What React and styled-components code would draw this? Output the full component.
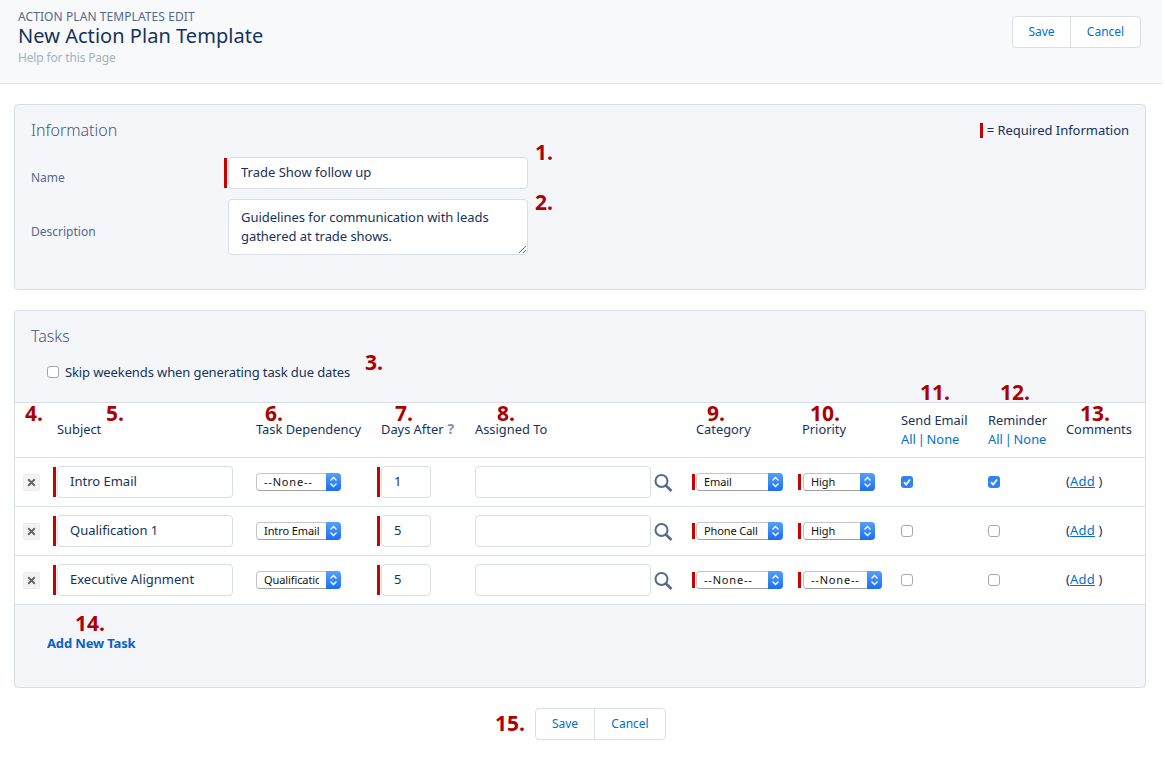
import styled, { createGlobalStyle } from 'styled-components';

const GlobalStyle = createGlobalStyle`
    * { box-sizing: border-box; }
    html, body { margin: 0; padding: 0; background: #fff; }
    body {
        font-family: "Noto Sans", "Open Sans", sans-serif;
        font-size: 13px;
        color: #16325c;
    }
`

const Page = styled.div`
    position: relative;
    width: 1162px;
    min-height: 761px;
`

const PageHeader = styled.header`
    height: 84px;
    display: flex;
    justify-content: space-between;
    align-items: flex-start;
    padding: 9px 21px 0 18px;
    background: #f7f9fb;
    border-bottom: 1px solid #d8dde6;
`

const Eyebrow = styled.div`
    font-size: 12px;
    line-height: 16px;
    letter-spacing: 0.08px;
    color: #54698d;
`

const Title = styled.h1`
    margin: 0;
    font-size: 20px;
    font-weight: 400;
    line-height: 22px;
    letter-spacing: 0.04px;
    color: #16325c;
`

const HelpLink = styled.a`
    display: block;
    margin-top: 3px;
    font-size: 12px;
    line-height: 16px;
    letter-spacing: -0.16px;
    color: #a4b1c2;
`

const ButtonGroup = styled.div`
    display: flex;
    height: 32px;
    margin-top: ${props => props.$top || 0}px;
    background: #fff;
    border: 1px solid #d8dde6;
    border-radius: 4px;
`

const Button = styled.button`
    width: ${props => props.$width}px;
    padding: 0 0 2px;
    border: none;
    background: none;
    font-family: inherit;
    font-size: 12px;
    color: #0070d2;
    & + & {
        border-left: 1px solid #d8dde6;
    }
`

const Main = styled.main`
    padding: 20px 16px 0 14px;
`

const Panel = styled.section`
    height: ${props => props.$height}px;
    margin-bottom: 20px;
    background: #f4f6f9;
    border: 1px solid #d8dde6;
    border-radius: 4px;
`

const PanelHead = styled.div`
    display: flex;
    justify-content: space-between;
    align-items: center;
    padding: 15px 16px 0;
`

const PanelTitle = styled.h2`
    margin: 0;
    font-size: 16px;
    font-weight: 300;
    line-height: 20px;
    color: #44597f;
`

const Legend = styled.div`
    display: flex;
    align-items: center;
    gap: 4px;
    font-size: 13px;
    letter-spacing: -0.03px;
    color: #16325c;
`

const RedBar = styled.span`
    flex: none;
    width: 3px;
    height: ${props => props.$height}px;
    background: #c80000;
`

const Form = styled.div`
    display: flex;
    flex-direction: column;
    gap: 10px;
    margin-top: 17px;
    padding-left: 16px;
`

const FormRow = styled.div`
    display: grid;
    grid-template-columns: 193px auto;
    align-items: center;
`

const FormLabel = styled.label`
    padding-top: 8px;
    font-size: 12px;
    color: #54698d;
`

const Required = styled.div`
    display: flex;
    align-items: center;
    gap: 1px;
`

const TextInput = styled.input`
    width: ${props => props.$width}px;
    height: 32px;
    padding: 0 12px 2px;
    border: 1px solid #d8dde6;
    border-radius: 4px;
    outline: none;
    background: #fff;
    font-family: inherit;
    font-size: 13px;
    color: #16325c;
`

const TextArea = styled.textarea`
    display: block;
    width: 300px;
    height: 56px;
    margin-left: 4px;
    padding: 8px 12px;
    border: 1px solid #d8dde6;
    border-radius: 4px;
    outline: none;
    background: #fff;
    font-family: inherit;
    font-size: 13px;
    line-height: 19px;
    letter-spacing: -0.05px;
    color: #16325c;
`

const SkipRow = styled.label`
    display: flex;
    align-items: center;
    gap: 6px;
    height: 22px;
    margin: 15px 0 19px 32px;
    font-size: 13px;
    letter-spacing: -0.11px;
    color: #16325c;
`

const Box = styled.span`
    display: flex;
    align-items: center;
    justify-content: center;
    width: 12px;
    height: 12px;
    background: ${props => (props.$checked ? '#2f83f5' : '#fff')};
    border: ${props => (props.$checked ? 'none' : '1px solid #a9a9a9')};
    border-radius: 3px;
`

const Table = styled.div`
    border-top: 1px solid #d8dde6;
    background: #fff;
`

const Row = styled.div`
    display: grid;
    grid-template-columns: 38px 203px 121px 98px 217px 106px 103px 87px 78px 79px;
    align-items: center;
    height: ${props => props.$height}px;
    border-bottom: 1px solid #d8dde6;
`

const HeadCell = styled.div`
    display: flex;
    flex-direction: column;
    padding-left: ${props => props.$indent || 0}px;
    padding-bottom: ${props => (props.$stacked ? 0 : 2)}px;
    font-size: 12.85px;
    line-height: 19px;
    white-space: nowrap;
    color: #16325c;
`

const Hint = styled.span`
    margin-left: 4px;
    font-size: 14px;
    font-weight: 700;
    color: #8090a8;
`

const Cell = styled.div`
    display: flex;
    align-items: center;
    gap: ${props => props.$gap || 0}px;
    padding-left: ${props => props.$indent || 0}px;
`

const RemoveButton = styled.span`
    display: flex;
    align-items: center;
    justify-content: center;
    width: 17px;
    height: 17px;
    margin-left: 8px;
    background: #f2f2f2;
    border: 1px solid #ececec;
    border-radius: 2px;
`

const Select = styled.div`
    display: flex;
    width: ${props => props.$width}px;
    height: 18px;
    background: #fff;
    border: 1px solid #c4c4c4;
    border-bottom-color: #a0a0a0;
    border-right: none;
    border-radius: 4px;
    font-size: 11px;
    line-height: 16px;
    color: #111;
`

const SelectValue = styled.span`
    flex: 1;
    min-width: 0;
    margin-right: 7px;
    padding-left: 7px;
    overflow: hidden;
    white-space: nowrap;
    letter-spacing: ${props => (props.$placeholder ? '0.8px' : '-0.1px')};
`

const SelectArrow = styled.span`
    flex: none;
    display: flex;
    align-items: center;
    justify-content: center;
    width: 15px;
    height: 18px;
    margin-top: -1px;
    background: linear-gradient(#56a0f8, #1a6ff0);
    border-radius: 0 4px 4px 0;
`

const Link = styled.a`
    color: #0070d2;
    text-decoration: ${props => (props.$underline ? 'underline' : 'none')};
`

const LinkPair = styled.span`
    word-spacing: -1.5px;
`

const AddComment = styled.span`
    padding-bottom: 2px;
    letter-spacing: 0.2px;
`

const AddTask = styled.a`
    display: block;
    padding: 29px 0 0 32px;
    font-size: 13px;
    font-weight: 700;
    line-height: 18px;
    letter-spacing: -0.15px;
    color: #0b62c4;
`

const Footer = styled.div`
    display: flex;
    justify-content: center;
    padding-left: 41px;
`

const Note = styled.span`
    position: absolute;
    left: ${props => props.$x}px;
    top: ${props => props.$y}px;
    font-family: "Open Sans", sans-serif;
    font-size: 21px;
    font-weight: 700;
    line-height: 24px;
    color: #ae0000;
`

const notes = [
    ['1.', 535, 140], ['2.', 535, 190], ['3.', 365, 350], ['4.', 25, 401], ['5.', 106, 401],
    ['6.', 265, 401], ['7.', 395, 401], ['8.', 497, 401], ['9.', 707, 401], ['10.', 810, 401],
    ['11.', 920, 380], ['12.', 1000, 380], ['13.', 1080, 401], ['14.', 75, 611], ['15.', 495, 711],
];

const tasks = [
    {subject: 'Intro Email', dependency: '--None--', days: '1', category: 'Email', priority: 'High', priorityWidth: 72, checked: true},
    {subject: 'Qualification 1', dependency: 'Intro Email', days: '5', category: 'Phone Call', priority: 'High', priorityWidth: 72, checked: false},
    {subject: 'Executive Alignment', dependency: 'Qualification 1', days: '5', category: '--None--', priority: '--None--', priorityWidth: 79, checked: false},
];

const Chevrons = () => (
    <svg width="9" height="12" viewBox="0 0 9 12" fill="none" stroke="#fff" strokeWidth="1.3">
        <path d="M1.5 4.5 4.5 1.5 7.5 4.5" />
        <path d="M1.5 7.5 4.5 10.5 7.5 7.5" />
    </svg>
);

const Checkbox = ({checked}) => (
    <Box $checked={checked}>
        {checked && (
            <svg width="10" height="10" viewBox="0 0 10 10" fill="none" stroke="#fff" strokeWidth="1.8">
                <path d="M2 5.2 4.2 7.5 8 2.5" />
            </svg>
        )}
    </Box>
);

const Lookup = () => (
    <svg width="20" height="20" viewBox="0 0 20 20" fill="none" stroke="#54698d">
        <circle cx="7.5" cy="9" r="6" strokeWidth="2" />
        <path d="M11.8 13.5 17.5 19" strokeWidth="2.6" />
    </svg>
);

const Remove = () => (
    <svg width="9" height="9" viewBox="0 0 9 9" stroke="#666" strokeWidth="2">
        <path d="M1.2 1.2 7.8 7.8M7.8 1.2 1.2 7.8" />
    </svg>
);

const FakeSelect = ({value, width}) => (
    <Select $width={width}>
        <SelectValue $placeholder={value.startsWith('--')}>{value}</SelectValue>
        <SelectArrow><Chevrons /></SelectArrow>
    </Select>
);

const SaveCancel = ({top, save, cancel}) => (
    <ButtonGroup $top={top}>
        <Button $width={save}>Save</Button>
        <Button $width={cancel}>Cancel</Button>
    </ButtonGroup>
);

const AllNone = () => (
    <LinkPair><Link>All</Link> <Link>|</Link> <Link>None</Link></LinkPair>
);

export default function App() {
    return (
        <Page>
            <GlobalStyle />
            <PageHeader>
                <div>
                    <Eyebrow>ACTION PLAN TEMPLATES EDIT</Eyebrow>
                    <Title>New Action Plan Template</Title>
                    <HelpLink>Help for this Page</HelpLink>
                </div>
                <SaveCancel top={7} save={57} cancel={70} />
            </PageHeader>
            <Main>
                <Panel $height={186}>
                    <PanelHead>
                        <PanelTitle>Information</PanelTitle>
                        <Legend><RedBar $height={15} />= Required Information</Legend>
                    </PanelHead>
                    <Form>
                        <FormRow>
                            <FormLabel>Name</FormLabel>
                            <Required>
                                <RedBar $height={30} />
                                <TextInput $width={300} readOnly value="Trade Show follow up" />
                            </Required>
                        </FormRow>
                        <FormRow>
                            <FormLabel>Description</FormLabel>
                            <TextArea readOnly value={'Guidelines for communication with leads gathered at trade shows.'} />
                        </FormRow>
                    </Form>
                </Panel>
                <Panel $height={378}>
                    <PanelHead><PanelTitle>Tasks</PanelTitle></PanelHead>
                    <SkipRow>
                        <Checkbox />
                        Skip weekends when generating task due dates
                    </SkipRow>
                    <Table>
                        <Row $height={55}>
                            <HeadCell />
                            <HeadCell $indent={4}>Subject</HeadCell>
                            <HeadCell>Task Dependency</HeadCell>
                            <HeadCell $indent={4}>
                                <span>Days After<Hint>?</Hint></span>
                            </HeadCell>
                            <HeadCell>Assigned To</HeadCell>
                            <HeadCell $indent={4}>Category</HeadCell>
                            <HeadCell $indent={4}>Priority</HeadCell>
                            <HeadCell $stacked>Send Email<AllNone /></HeadCell>
                            <HeadCell $stacked>Reminder<AllNone /></HeadCell>
                            <HeadCell>Comments</HeadCell>
                        </Row>
                        {tasks.map(task => (
                            <Row $height={49} key={task.subject}>
                                <Cell><RemoveButton><Remove /></RemoveButton></Cell>
                                <Cell>
                                    <Required>
                                        <RedBar $height={30} />
                                        <TextInput $width={176} readOnly value={task.subject} />
                                    </Required>
                                </Cell>
                                <Cell><FakeSelect value={task.dependency} width={85} /></Cell>
                                <Cell>
                                    <Required>
                                        <RedBar $height={30} />
                                        <TextInput $width={50} readOnly value={task.days} />
                                    </Required>
                                </Cell>
                                <Cell $gap={3}>
                                    <TextInput $width={176} readOnly />
                                    <Lookup />
                                </Cell>
                                <Cell $gap={1}>
                                    <RedBar $height={16} />
                                    <FakeSelect value={task.category} width={87} />
                                </Cell>
                                <Cell $gap={2}>
                                    <RedBar $height={16} />
                                    <FakeSelect value={task.priority} width={task.priorityWidth} />
                                </Cell>
                                <Cell><Checkbox checked={task.checked} /></Cell>
                                <Cell><Checkbox checked={task.checked} /></Cell>
                                <Cell>
                                    <AddComment>(<Link $underline>Add</Link> )</AddComment>
                                </Cell>
                            </Row>
                        ))}
                    </Table>
                    <AddTask>Add New Task</AddTask>
                </Panel>
                <Footer>
                    <SaveCancel save={58} cancel={71} />
                </Footer>
            </Main>
            {notes.map(([text, x, y]) => (
                <Note key={text} $x={x} $y={y}>{text}</Note>
            ))}
        </Page>
    );
}
